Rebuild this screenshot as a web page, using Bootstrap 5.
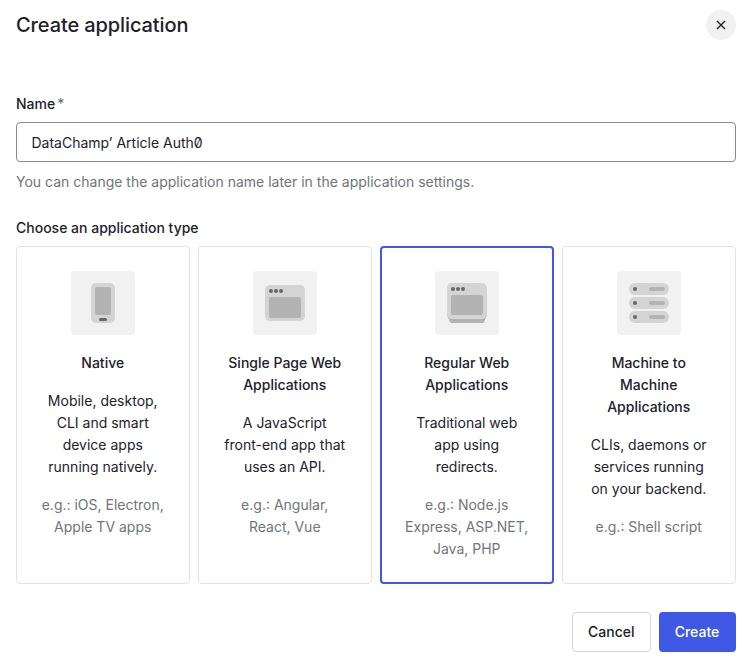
<!DOCTYPE html>
<html lang="en">
<head>
<meta charset="utf-8">
<title>Create application</title>
<link href="https://cdn.jsdelivr.net/npm/bootstrap@5.3.0/dist/css/bootstrap.min.css" rel="stylesheet">
<style>
body { font-family: Inter, "Liberation Sans", sans-serif; font-size: 14px; line-height: 22px; color: #1e212a; background: #fff; }
.dialog { padding: 8px 12px 11px 16px; }
.dialog-title { font-size: 20px; line-height: 34px; font-weight: 500; margin: 0; letter-spacing: -0.1px; }
.close-btn { width: 30px; height: 30px; border: 0; border-radius: 50%; background: #f1f1f1; padding: 0; margin-top: 2px; color: #1e212a; }
.form-area { margin-top: 51px; }
.field-label { font-weight: 450; margin-bottom: 7px; color: #1e212a; }
.req { color: #65676e; font-weight: 400; margin-left: 2px; }
.name-input.form-control { height: 40px; font-size: 14px; line-height: 22px; padding: 8px 14.5px; border: 1px solid #8a8b8f; border-radius: 4px; color: #1e212a; font-feature-settings: "zero" 1; }
.hint { color: #727479; margin-top: 9px; }
.type-label { font-weight: 450; margin-top: 24px; margin-bottom: 7px; }
.type-grid { display: grid; grid-template-columns: repeat(4, 174px); gap: 8px; }
.type-card { height: 338px; border: 1px solid #e3e3e5; border-radius: 4px; padding: 24px; background: #fff; text-align: center; }
.type-card.selected { border: 2px solid #3f59e4; padding: 23px; }
.icon-tile { width: 64px; height: 64px; border-radius: 4px; background: #f1f1f1; margin: 0 auto; display: block; }
.type-name { font-weight: 450; font-size: 14px; line-height: 22px; margin: 17px 0 16px; padding-right: .5px; }
.type-desc { margin: 0 0 16px; padding-right: .5px; }
.type-eg { margin: 0; color: #727479; padding-right: .5px; }
.actions { margin-top: 28px; gap: 8px; }
.btn-cancel.btn { width: 79px; height: 40px; font-size: 14px; line-height: 22px; font-weight: 450; border: 1px solid #d6d6d8; border-radius: 4px; background: #fff; color: #1e212a; padding: 0 .5px 0 0; }
.btn-create.btn { width: 77px; height: 40px; font-size: 14px; line-height: 22px; font-weight: 450; border: 0; border-radius: 4px; background: #3f59e4; color: #fff; padding: 0 1px 0 0; }
</style>
</head>
<body>
<div class="dialog">
  <div class="d-flex justify-content-between align-items-start">
    <h1 class="dialog-title">Create application</h1>
    <button type="button" class="close-btn d-flex align-items-center justify-content-center" aria-label="Close">
      <svg width="12" height="12" viewBox="0 0 12 12" fill="none" stroke="#1e212a" stroke-width="1.4"><path d="M2 2l8 8M10 2l-8 8"/></svg>
    </button>
  </div>
  <div class="form-area">
    <div class="field-label">Name<span class="req">*</span></div>
    <input class="form-control name-input" type="text" value="DataChamp’ Article Auth0">
    <div class="hint">You can change the application name later in the application settings.</div>
    <div class="type-label">Choose an application type</div>
    <div class="type-grid">
      <div class="type-card">
        <svg class="icon-tile" viewBox="0 0 64 64">
          <rect x="20" y="12" width="24" height="40" rx="5" fill="#d4d4d4"/>
          <rect x="24" y="16" width="16" height="28" rx="2" fill="#b3b3b3"/>
          <rect x="28" y="47" width="8" height="3" rx="1.500" fill="#666"/>
        </svg>
        <div class="type-name">Native</div>
        <p class="type-desc">Mobile, desktop, CLI and smart device apps running natively.</p>
        <p class="type-eg">e.g.: iOS, Electron, Apple TV apps</p>
      </div>
      <div class="type-card">
        <svg class="icon-tile" viewBox="0 0 64 64">
          <rect x="12" y="14" width="40" height="36" rx="5" fill="#d4d4d4"/>
          <rect x="16" y="26" width="32" height="21" rx="2" fill="#b3b3b3"/>
          <circle cx="18" cy="20" r="2" fill="#666"/><circle cx="23" cy="20" r="2" fill="#666"/><circle cx="28" cy="20" r="2" fill="#666"/>
        </svg>
        <div class="type-name">Single Page Web Applications</div>
        <p class="type-desc">A JavaScript front-end app that uses an API.</p>
        <p class="type-eg">e.g.: Angular, React, Vue</p>
      </div>
      <div class="type-card selected">
        <svg class="icon-tile" viewBox="0 0 64 64">
          <path d="M12 44h40l-3 7a2 2 0 0 1-2 1H17a2 2 0 0 1-2-1z" fill="#b3b3b3"/>
          <rect x="12" y="12" width="40" height="36" rx="5" fill="#d4d4d4"/>
          <rect x="16" y="24" width="32" height="20" rx="2" fill="#b3b3b3"/>
          <circle cx="18" cy="18" r="2" fill="#666"/><circle cx="23" cy="18" r="2" fill="#666"/><circle cx="28" cy="18" r="2" fill="#666"/>
        </svg>
        <div class="type-name">Regular Web Applications</div>
        <p class="type-desc">Traditional web app using redirects.</p>
        <p class="type-eg">e.g.: Node.js Express, ASP.NET, Java, PHP</p>
      </div>
      <div class="type-card">
        <svg class="icon-tile" viewBox="0 0 64 64">
          <rect x="12" y="12" width="40" height="12" rx="6" fill="#d4d4d4"/>
          <rect x="12" y="26" width="40" height="12" rx="6" fill="#d4d4d4"/>
          <rect x="12" y="40" width="40" height="12" rx="6" fill="#d4d4d4"/>
          <circle cx="18" cy="18" r="2" fill="#666"/><circle cx="18" cy="32" r="2" fill="#666"/><circle cx="18" cy="46" r="2" fill="#666"/>
          <rect x="32" y="16" width="16" height="4" rx="2" fill="#b3b3b3"/>
          <rect x="32" y="30" width="16" height="4" rx="2" fill="#b3b3b3"/>
          <rect x="32" y="44" width="16" height="4" rx="2" fill="#b3b3b3"/>
        </svg>
        <div class="type-name">Machine to Machine Applications</div>
        <p class="type-desc">CLIs, daemons or services running on your backend.</p>
        <p class="type-eg">e.g.: Shell script</p>
      </div>
    </div>
    <div class="actions d-flex justify-content-end">
      <button type="button" class="btn btn-cancel">Cancel</button>
      <button type="button" class="btn btn-create">Create</button>
    </div>
  </div>
</div>
<script src="https://cdn.jsdelivr.net/npm/bootstrap@5.3.0/dist/js/bootstrap.bundle.min.js"></script>
</body>
</html>
